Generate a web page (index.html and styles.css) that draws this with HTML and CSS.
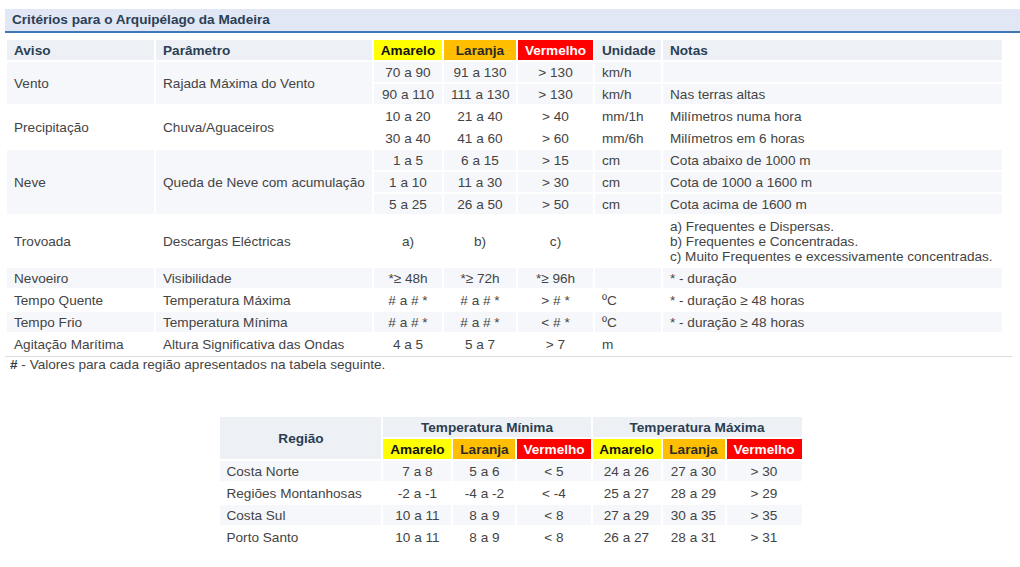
FILE: index.html
```html
<!DOCTYPE html>
<html lang="pt">
<head>
<meta charset="utf-8">
<title>Critérios para o Arquipélago da Madeira</title>
<link rel="stylesheet" href="styles.css">
</head>
<body>
<div class="page">
  <div class="title-bar">Critérios para o Arquipélago da Madeira</div>

  <table class="criteria">
    <colgroup>
      <col class="w-aviso"><col class="w-param"><col class="w-am"><col class="w-la"><col class="w-ve"><col class="w-un"><col class="w-no">
    </colgroup>
    <thead>
      <tr>
        <th>Aviso</th><th>Parâmetro</th>
        <th class="lv amarelo">Amarelo</th><th class="lv laranja">Laranja</th><th class="lv vermelho">Vermelho</th>
        <th>Unidade</th><th>Notas</th>
      </tr>
    </thead>
    <tbody class="alt">
      <tr><td rowspan="2">Vento</td><td rowspan="2">Rajada Máxima do Vento</td><td class="c">70 a 90</td><td class="c">91 a 130</td><td class="c">&gt; 130</td><td>km/h</td><td></td></tr>
      <tr><td class="c">90 a 110</td><td class="c">111 a 130</td><td class="c">&gt; 130</td><td>km/h</td><td>Nas terras altas</td></tr>
    </tbody>
    <tbody>
      <tr><td rowspan="2">Precipitação</td><td rowspan="2">Chuva/Aguaceiros</td><td class="c">10 a 20</td><td class="c">21 a 40</td><td class="c">&gt; 40</td><td>mm/1h</td><td>Milímetros numa hora</td></tr>
      <tr><td class="c">30 a 40</td><td class="c">41 a 60</td><td class="c">&gt; 60</td><td>mm/6h</td><td>Milímetros em 6 horas</td></tr>
    </tbody>
    <tbody class="alt">
      <tr><td rowspan="3">Neve</td><td rowspan="3">Queda de Neve com acumulação</td><td class="c">1 a 5</td><td class="c">6 a 15</td><td class="c">&gt; 15</td><td>cm</td><td>Cota abaixo de 1000 m</td></tr>
      <tr><td class="c">1 a 10</td><td class="c">11 a 30</td><td class="c">&gt; 30</td><td>cm</td><td>Cota de 1000 a 1600 m</td></tr>
      <tr><td class="c">5 a 25</td><td class="c">26 a 50</td><td class="c">&gt; 50</td><td>cm</td><td>Cota acima de 1600 m</td></tr>
    </tbody>
    <tbody>
      <tr><td>Trovoada</td><td>Descargas Eléctricas</td><td class="c">a)</td><td class="c">b)</td><td class="c">c)</td><td></td><td>a) Frequentes e Dispersas.<br>b) Frequentes e Concentradas.<br>c) Muito Frequentes e excessivamente concentradas.</td></tr>
    </tbody>
    <tbody class="alt">
      <tr><td>Nevoeiro</td><td>Visibilidade</td><td class="c">*≥ 48h</td><td class="c">*≥ 72h</td><td class="c">*≥ 96h</td><td></td><td>* - duração</td></tr>
    </tbody>
    <tbody>
      <tr><td>Tempo Quente</td><td>Temperatura Máxima</td><td class="c"># a # *</td><td class="c"># a # *</td><td class="c">&gt; # *</td><td>ºC</td><td>* - duração ≥ 48 horas</td></tr>
    </tbody>
    <tbody class="alt">
      <tr><td>Tempo Frio</td><td>Temperatura Mínima</td><td class="c"># a # *</td><td class="c"># a # *</td><td class="c">&lt; # *</td><td>ºC</td><td>* - duração ≥ 48 horas</td></tr>
    </tbody>
    <tbody>
      <tr><td>Agitação Marítima</td><td>Altura Significativa das Ondas</td><td class="c">4 a 5</td><td class="c">5 a 7</td><td class="c">&gt; 7</td><td>m</td><td></td></tr>
    </tbody>
  </table>

  <div class="footnote"><b>#</b> - Valores para cada região apresentados na tabela seguinte.</div>

  <table class="regions">
    <colgroup>
      <col class="r-reg"><col class="r-am"><col class="r-la"><col class="r-ve"><col class="r-am"><col class="r-la"><col class="r-ve2">
    </colgroup>
    <thead>
      <tr>
        <th rowspan="2" class="c">Região</th>
        <th colspan="3" class="c">Temperatura Mínima</th>
        <th colspan="3" class="c">Temperatura Máxima</th>
      </tr>
      <tr>
        <th class="lv amarelo">Amarelo</th><th class="lv laranja">Laranja</th><th class="lv vermelho">Vermelho</th>
        <th class="lv amarelo">Amarelo</th><th class="lv laranja">Laranja</th><th class="lv vermelho">Vermelho</th>
      </tr>
    </thead>
    <tbody>
      <tr class="alt"><td>Costa Norte</td><td class="c">7 a 8</td><td class="c">5 a 6</td><td class="c">&lt; 5</td><td class="c">24 a 26</td><td class="c">27 a 30</td><td class="c">&gt; 30</td></tr>
      <tr><td>Regiões Montanhosas</td><td class="c">-2 a -1</td><td class="c">-4 a -2</td><td class="c">&lt; -4</td><td class="c">25 a 27</td><td class="c">28 a 29</td><td class="c">&gt; 29</td></tr>
      <tr class="alt"><td>Costa Sul</td><td class="c">10 a 11</td><td class="c">8 a 9</td><td class="c">&lt; 8</td><td class="c">27 a 29</td><td class="c">30 a 35</td><td class="c">&gt; 35</td></tr>
      <tr><td>Porto Santo</td><td class="c">10 a 11</td><td class="c">8 a 9</td><td class="c">&lt; 8</td><td class="c">26 a 27</td><td class="c">28 a 31</td><td class="c">&gt; 31</td></tr>
    </tbody>
  </table>
</div>
</body>
</html>
```
FILE: styles.css
```css
html, body {
  margin: 0;
  padding: 0;
  background: #ffffff;
}

body {
  font-family: "Liberation Sans", Arial, sans-serif;
  font-size: 13.6px;
  color: #444444;
}

.page {
  padding: 9px 3px 0 5px;
}

.title-bar {
  background: #e1e7f5;
  border-bottom: 2px solid #3f78b6;
  color: #2b3f55;
  font-weight: bold;
  font-size: 13.6px;
  line-height: 18px;
  padding: 2px 7px 2px 7px;
  margin-right: -3px;
}

table {
  border-collapse: separate;
  border-spacing: 2px;
  table-layout: fixed;
}

th, td {
  padding: 2.5px 7px 2.5px 7px;
  line-height: 15px;
  text-align: left;
  vertical-align: middle;
  white-space: nowrap;
  overflow: hidden;
}

th {
  background: #edf1f5;
  color: #2b3e52;
  font-weight: bold;
}

.c {
  text-align: center;
}

th.lv {
  text-align: center;
  padding-left: 2px;
  padding-right: 2px;
}

.amarelo {
  background: #ffff00;
  color: #111111;
}

.laranja {
  background: #ffbf00;
  color: #2b2b2b;
}

.vermelho {
  background: #ff0000;
  color: #ffffff;
}

/* main criteria table */
.criteria {
  width: 999px;
  margin-top: 5px;
}

.criteria .w-aviso { width: 147px; }
.criteria .w-param { width: 216px; }
.criteria .w-am { width: 68px; }
.criteria .w-la { width: 72px; }
.criteria .w-ve { width: 75px; }
.criteria .w-un { width: 66px; }
.criteria .w-no { width: 339px; }

.criteria tbody.alt td {
  background: #f5f7fa;
}

.footnote {
  border-top: 1px solid #dddddd;
  line-height: 16px;
  padding-left: 5px;
  margin-right: 5px;
  color: #444444;
}

.footnote b {
  color: #2b3e52;
}

/* regions table */
.regions {
  width: 585px;
  margin: 42px auto 0 auto;
}

.regions .r-reg { width: 161px; }
.regions .r-am { width: 68px; }
.regions .r-la { width: 62px; }
.regions .r-ve { width: 73px; }
.regions .r-ve2 { width: 75px; }

.regions td {
  padding-left: 6px;
  padding-right: 6px;
}

.regions tr.alt td {
  background: #f5f7fa;
}
```
